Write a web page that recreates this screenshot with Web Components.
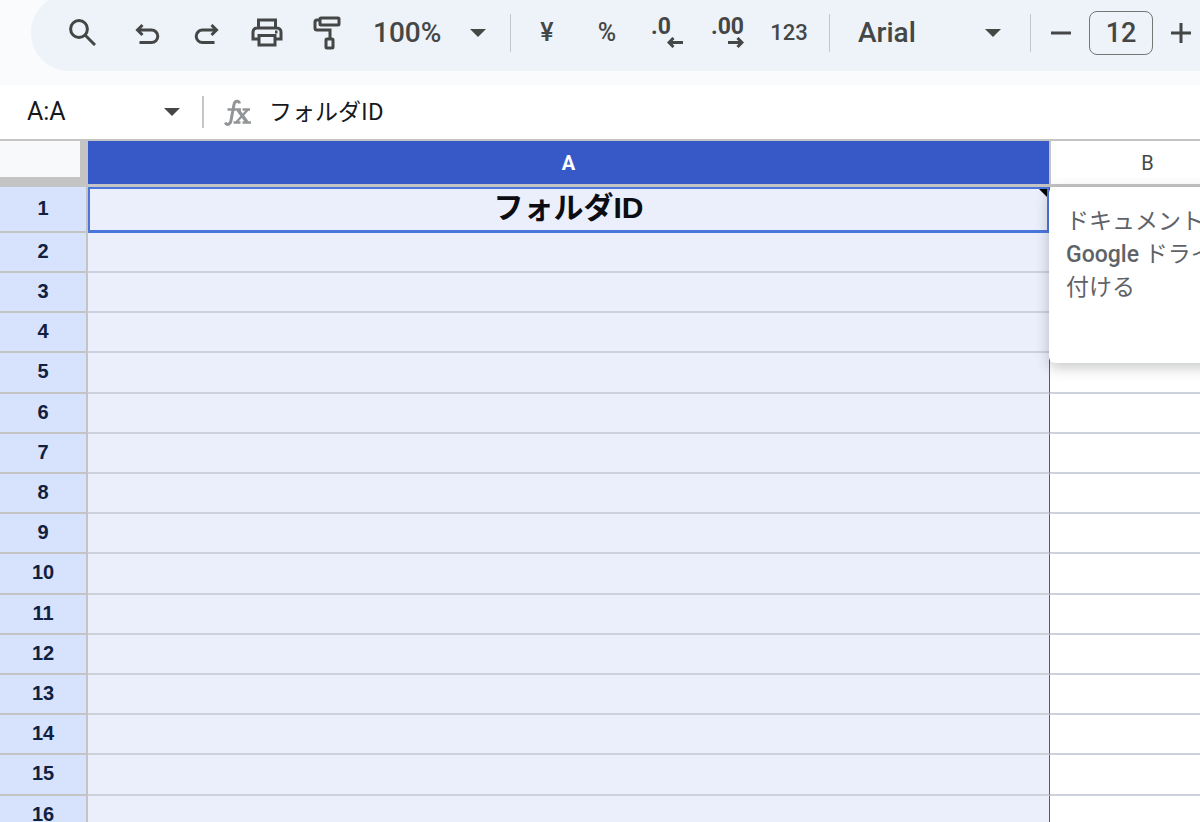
<!DOCTYPE html>
<html lang="ja">
<head>
<meta charset="utf-8">
<meta name="viewport" content="width=device-width, initial-scale=1">
<title>フォルダID</title>
<style>
  html, body { height: 100%; }
  body {
    margin: 0;
    overflow: hidden;
    background: #f9fbfd;
    color: #444746;
    font-family: Roboto, "Noto Sans CJK JP", sans-serif;
  }
</style>
</head>
<body>
<sheet-app></sheet-app>

<script>
const ICONS = {
  search: `<circle cx="10" cy="10" r="8.4"/><path d="M16 16l10 10"/>`,
  undo: `<path d="M8.500 4L3.500 9l5 5M4 9h13.500a6.300 6.300 0 0 1 0 12.600H5.500"/>`,
  redo: `<path d="M17.500 4l5 5l-5 5M22 9H8.500a6.300 6.300 0 0 0 0 12.600h12"/>`,
  print: `<path d="M7.500 9V2h17v7M8 21H2V14a4 4 0 0 1 4-4h20a4 4 0 0 1 4 4v7h-6"/><path d="M8 17.500h16v9.500H8z"/><path d="M24 14h2.500"/>`,
  paint: `<rect x="7" y="2" width="19" height="7" rx="1"/><path d="M7 4H4a2 2 0 0 0-2 2v6a2 2 0 0 0 2 2h13v9"/><rect x="13" y="23" width="7" height="9" rx="1"/>`,
  minus: `<path d="M0 10h20"/>`,
  plus: `<path d="M0 10h20M10 0v20"/>`,
  left: `<path d="M16 5.500H2M6.500 1L2 5.500L6.500 10"/>`,
  right: `<path d="M0 5.500h14M9.500 1L14 5.500L9.500 10"/>`,
};

const icon = (name, width, height, stroke = 3) =>
  `<svg width="${width}" height="${height}" viewBox="0 0 ${width} ${height}" fill="none" stroke="currentColor" stroke-width="${stroke}" aria-hidden="true">${ICONS[name]}</svg>`;

// Toolbar button, the slot takes a text or an icon
class ToolButton extends HTMLElement {
  constructor() {
    super();
    this._root = this.attachShadow({ mode: "open" });
  }
  connectedCallback() {
    this._root.innerHTML = /*html*/ `
      <style>
        :host { display: block; flex: none; width: 60px; }
        :host([narrow]) { width: 36px; }
        :host([wide]) { width: 64px; }
        button {
          display: flex; align-items: center; justify-content: center;
          width: 100%; height: 44px; padding: 0; border: 0;
          background: none; color: inherit; cursor: pointer;
          font: 500 22px/28px Roboto, sans-serif;
        }
        :host([symbol]) button { font-size: 25px; }
      </style>
      <button type="button" aria-label="${this.getAttribute("label")}"><slot></slot></button>
    `;
  }
}

class DropDown extends HTMLElement {
  constructor() {
    super();
    this._root = this.attachShadow({ mode: "open" });
  }
  connectedCallback() {
    this._root.innerHTML = /*html*/ `
      <style>
        :host { display: grid; grid-template-columns: 1fr 16px; align-items: center; flex: none; }
        select {
          grid-area: 1 / 1 / 2 / 3; width: 100%; height: 44px; padding: 0; border: 0;
          appearance: none; background: none; color: inherit; cursor: pointer;
          font: 500 28px/32px Roboto, sans-serif;
        }
        svg { grid-area: 1 / 2; pointer-events: none; }
      </style>
      <select aria-label="${this.getAttribute("label")}"><option>${this.getAttribute("value")}</option></select>
      <svg width="16" height="8" viewBox="0 0 16 8" fill="#444746" aria-hidden="true"><path d="M0 0h16l-8 8z"/></svg>
    `;
  }
}

class SheetToolbar extends HTMLElement {
  constructor() {
    super();
    this._root = this.attachShadow({ mode: "open" });
  }
  connectedCallback() {
    this._root.innerHTML = /*html*/ `
      <style>
        :host { display: block; height: 85px; overflow: hidden; }
        .pill {
          display: flex; align-items: center; box-sizing: border-box;
          height: 77px; margin: -6px 0 0 31px; padding-left: 21px;
          border-radius: 38px 0 0 38px; background: #eef2f9;
        }
        .search { margin-right: 5px; }
        .zoom { width: 113px; margin: 0 24px 0 16px; }
        .family { width: 143px; margin: 0 29px 0 28px; }
        hr { flex: none; width: 1px; height: 38px; margin: 0; border: 0; background: #c4c7cc; }
        .formats { display: flex; margin: 0 8px 0 6px; }
        .decimal { display: grid; width: 32px; font-weight: 700; font-size: 23px; line-height: 20px; text-align: left; }
        .decimal svg { justify-self: end; }
        .size { display: flex; align-items: center; gap: 10px; margin-left: 12px; }
        input {
          box-sizing: border-box; width: 64px; height: 44px; padding: 0;
          border: 1px solid #747775; border-radius: 8px; background: none; color: inherit;
          font: 500 27px/32px Roboto, sans-serif; text-align: center;
        }
      </style>
      <div class="pill" role="toolbar">
        <tool-button class="search" label="検索">${icon("search", 27, 27)}</tool-button>
        <tool-button label="元に戻す">${icon("undo", 26, 24)}</tool-button>
        <tool-button label="やり直し">${icon("redo", 26, 24)}</tool-button>
        <tool-button label="印刷">${icon("print", 32, 29)}</tool-button>
        <tool-button label="書式を貼り付け">${icon("paint", 28, 34)}</tool-button>
        <drop-down class="zoom" label="ズーム" value="100%"></drop-down>
        <hr>
        <div class="formats">
          <tool-button symbol label="通貨">¥</tool-button>
          <tool-button symbol label="パーセント">%</tool-button>
          <tool-button label="小数点以下を減らす"><span class="decimal">.0${icon("left", 16, 11)}</span></tool-button>
          <tool-button label="小数点以下を増やす"><span class="decimal">.00${icon("right", 16, 11)}</span></tool-button>
          <tool-button wide label="表示形式">123</tool-button>
        </div>
        <hr>
        <drop-down class="family" label="フォント" value="Arial"></drop-down>
        <hr>
        <div class="size">
          <tool-button narrow label="縮小">${icon("minus", 20, 20)}</tool-button>
          <input aria-label="フォントサイズ" value="12">
          <tool-button narrow label="拡大">${icon("plus", 20, 20)}</tool-button>
        </div>
      </div>
    `;
  }
}

class FormulaBar extends HTMLElement {
  constructor() {
    super();
    this._root = this.attachShadow({ mode: "open" });
  }
  connectedCallback() {
    this._root.innerHTML = /*html*/ `
      <style>
        :host {
          display: flex; align-items: center; height: 54px; padding-left: 27px;
          background: #fff; border-bottom: 2px solid #c4c4c4;
        }
        input { min-width: 0; padding: 0; border: 0; background: none; color: #16181c; }
        .name { width: 137px; font: 25px/32px Roboto, sans-serif; }
        .formula { flex: 1; height: 32px; padding-bottom: 4px; font: 23px/32px "Noto Sans CJK JP", sans-serif; }
        hr { width: 2px; height: 32px; margin: 0 20px 0 22px; border: 0; background: #c4c7c5; }
        .fx { margin-right: 18px; }
      </style>
      <input class="name" aria-label="名前ボックス" value="A:A">
      <svg width="16" height="8" viewBox="0 0 16 8" fill="#444746" aria-hidden="true"><path d="M0 0h16l-8 8z"/></svg>
      <hr>
      <svg class="fx" width="27" height="28" viewBox="0 0 27 28" fill="none" stroke="#929597" aria-hidden="true">
        <path stroke-width="3" d="M15.500 5.500C15 2.500 11 2 10 6.500L7 22.500C6.200 27 2.500 27.500 1.300 24.500"/>
        <path stroke-width="2.400" d="M3.500 11.500H17M18.500 11.500h7.500M9.500 24.500h7M18.500 24.500h8.500"/>
        <path stroke-width="3.400" d="M14 12l9 12"/>
        <path stroke-width="2.400" d="M23.500 12L12.500 24"/>
      </svg>
      <input class="formula" aria-label="数式バー" value="${this.getAttribute("value")}">
    `;
  }
}

// Hint card that hangs over the grid, next to a cell
class CellNote extends HTMLElement {
  constructor() {
    super();
    this._root = this.attachShadow({ mode: "open" });
  }
  connectedCallback() {
    this._root.innerHTML = /*html*/ `
      <style>
        :host {
          display: block; box-sizing: border-box; width: 320px; height: 176px;
          padding: 18px 17px; border-radius: 6px; background: #fff; color: #5f6368;
          box-shadow: 0 4px 14px rgba(60, 64, 67, .3);
          font: 23px/33px Roboto, "Noto Sans CJK JP", sans-serif;
          text-align: left; white-space: nowrap;
        }
      </style>
      <slot></slot>
    `;
  }
}

class SheetGrid extends HTMLElement {
  constructor() {
    super();
    this._root = this.attachShadow({ mode: "open" });
  }
  connectedCallback() {
    this._root.innerHTML = /*html*/ `
      <style>
        :host { display: block; overflow: hidden; background: #fff; }
        /* column B runs on past the window's right edge */
        table { width: calc(100% + 44px); table-layout: fixed; border-collapse: separate; border-spacing: 0; }
        .rows { width: 88px; }
        .b { width: 195px; }
        th, td { box-sizing: border-box; height: 40px; padding: 0; border: 0 solid #c4c4c4; }
        thead th { height: 46px; border-bottom-width: 3px; font: 20px/24px Roboto, sans-serif; }
        thead .corner { border-width: 0 8px 10px 0; background: #f8f9fb; }
        thead .on { background: #3759c8; color: #fff; font-weight: 700; }
        thead .off { border-left-width: 2px; }
        tbody th {
          padding-bottom: 3px; border-width: 0 2px 2px 0; background: #d7e2fc; color: #10203f;
          font: 700 20px/24px "Liberation Sans", Arial, sans-serif;
        }
        td { position: relative; border-color: #cdd1dc; border-bottom-width: 2px; }
        td.on { background: #eaeffb; }
        td.off { border-left: 1px solid #3759c8; }
        tbody tr:nth-child(5n) > * { height: 41px; }
        tbody tr:first-child > * { height: 46px; }
        td.active {
          padding-bottom: 3px; border: 2px solid #4a76dc; border-bottom-width: 3px; color: #0b0d12;
          font: 700 30px/32px "Liberation Sans", "Noto Sans CJK JP", sans-serif; text-align: center;
        }
        .mark { position: absolute; top: 0; right: 0; border: 4px solid #000; border-left-color: transparent; border-bottom-color: transparent; }
        cell-note { position: absolute; top: 0; left: -1px; z-index: 1; }
        b { font-weight: 500; }
      </style>
      <table>
        <colgroup><col class="rows"><col><col class="b"></colgroup>
        <thead><tr><th class="corner"></th><th class="on">A</th><th class="off">B</th></tr></thead>
        <tbody></tbody>
      </table>
    `;
    this._$body = this._root.querySelector("tbody");
    this._render();
  }
  _render() {
    const title = this.getAttribute("heading");
    let rows = `
      <tr>
        <th>1</th>
        <td class="on active">${title}<span class="mark"></span></td>
        <td class="off"><cell-note>ドキュメント<br><b>Google</b> ドライ<br>付ける</cell-note></td>
      </tr>`;
    for (let row = 2; row <= Number(this.getAttribute("rows")); row++) {
      rows += `<tr><th>${row}</th><td class="on"></td><td class="off"></td></tr>`;
    }
    this._$body.innerHTML = rows;
  }
}

class SheetApp extends HTMLElement {
  constructor() {
    super();
    this._root = this.attachShadow({ mode: "open" });
  }
  connectedCallback() {
    this._root.innerHTML = /*html*/ `
      <style>
        :host { display: flex; flex-direction: column; height: 100vh; overflow: hidden; }
        sheet-toolbar, formula-bar { flex: none; }
        sheet-grid { flex: 1; min-height: 0; }
      </style>
      <sheet-toolbar></sheet-toolbar>
      <formula-bar value="フォルダID"></formula-bar>
      <sheet-grid heading="フォルダID" rows="16"></sheet-grid>
    `;
  }
}

window.customElements.define("tool-button", ToolButton);
window.customElements.define("drop-down", DropDown);
window.customElements.define("sheet-toolbar", SheetToolbar);
window.customElements.define("formula-bar", FormulaBar);
window.customElements.define("cell-note", CellNote);
window.customElements.define("sheet-grid", SheetGrid);
window.customElements.define("sheet-app", SheetApp);
</script>
</body>
</html>
